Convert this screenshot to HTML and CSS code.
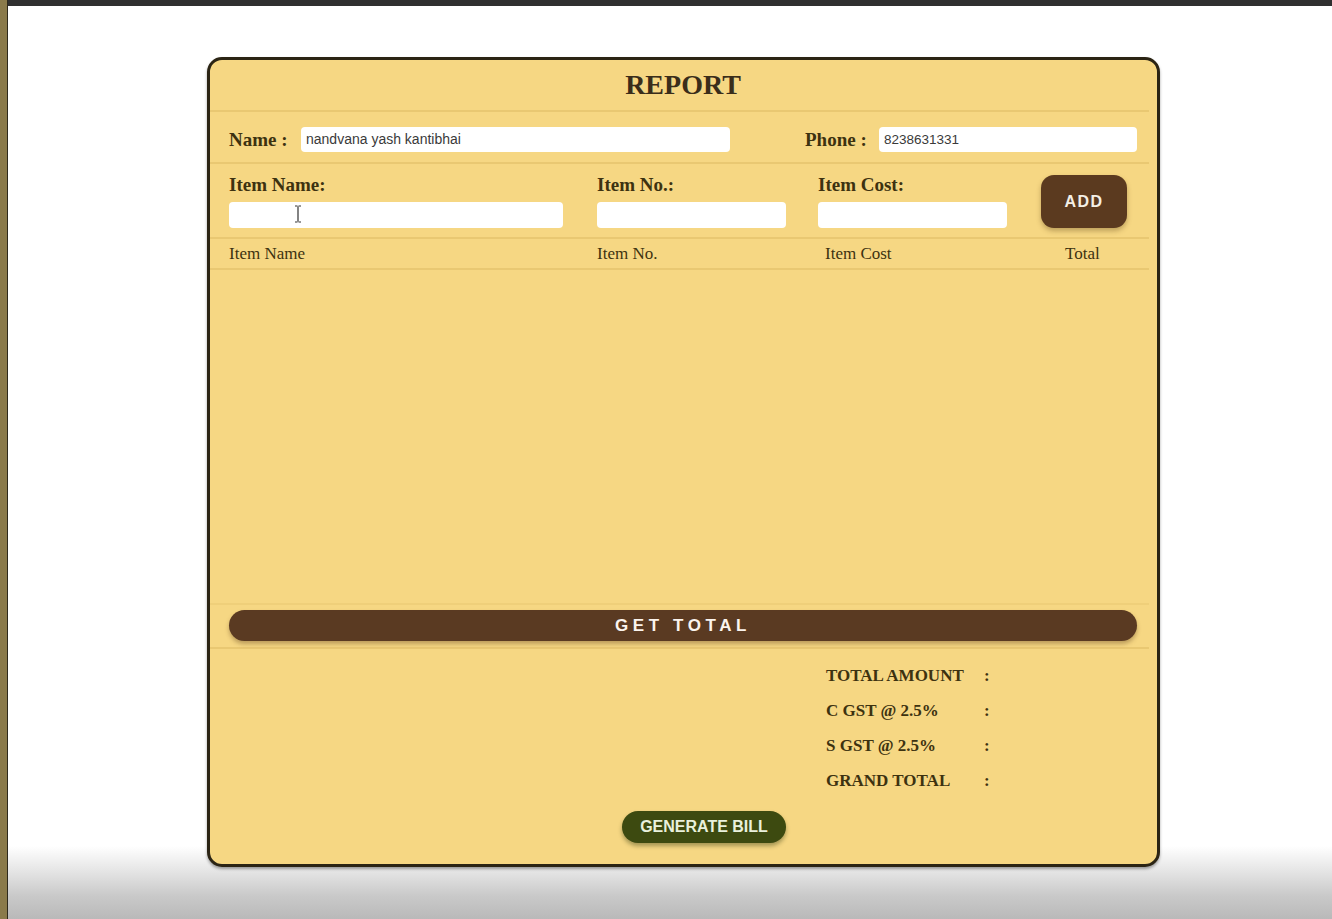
FILE: index.html
```html
<!DOCTYPE html>
<html lang="en">
<head>
<meta charset="utf-8">
<title>Report</title>
<link rel="stylesheet" href="styles.css">
</head>
<body>
<div class="frame">
  <div class="side-strip"></div>
  <div class="viewport">
    <div class="topbar"></div>
    <main class="page">
      <section class="card">
        <h1 class="title">REPORT</h1>

        <div class="row name-row">
          <label class="lbl">Name :</label>
          <div class="input name-input">nandvana yash kantibhai</div>
          <label class="lbl phone-lbl">Phone :</label>
          <div class="input phone-input">8238631331</div>
        </div>

        <div class="row item-row">
          <div class="field">
            <label class="lbl">Item Name:</label>
            <div class="input cursor-host">
              <svg class="ibeam" width="8" height="18" viewBox="0 0 8 18"><path d="M1 1h2.5M4.5 1H7M4 1.5v15M1 17h2.5M4.5 17H7" stroke="#333" stroke-width="1.2" fill="none"/></svg>
            </div>
          </div>
          <div class="field">
            <label class="lbl">Item No.:</label>
            <div class="input"></div>
          </div>
          <div class="field">
            <label class="lbl">Item Cost:</label>
            <div class="input"></div>
          </div>
          <button class="btn add-btn">ADD</button>
        </div>

        <div class="row table-head">
          <span>Item Name</span>
          <span>Item No.</span>
          <span>Item Cost</span>
          <span class="total-col">Total</span>
        </div>

        <div class="row table-body"></div>

        <div class="row total-row">
          <button class="btn get-total">GET TOTAL</button>
        </div>

        <div class="summary">
          <div class="sum-list">
            <div class="sum-line"><span class="sum-lbl">TOTAL AMOUNT</span><span class="colon">:</span></div>
            <div class="sum-line"><span class="sum-lbl">C GST @ 2.5%</span><span class="colon">:</span></div>
            <div class="sum-line"><span class="sum-lbl">S GST @ 2.5%</span><span class="colon">:</span></div>
            <div class="sum-line"><span class="sum-lbl">GRAND TOTAL</span><span class="colon">:</span></div>
          </div>
          <div class="bill-wrap">
            <button class="btn gen-bill">GENERATE BILL</button>
          </div>
        </div>
      </section>
    </main>
  </div>
</div>
</body>
</html>
```

FILE: styles.css
```css
* { box-sizing: border-box; }

html, body {
  margin: 0;
  padding: 0;
  height: 100%;
  overflow: hidden;
}

body {
  font-family: "Liberation Serif", "Times New Roman", serif;
  background: #ffffff;
}

.frame {
  display: flex;
  height: 919px;
}

.side-strip {
  width: 8px;
  flex: 0 0 8px;
  background: #8a7a4a;
  border-right: 1px solid #2e2a1c;
}

.viewport {
  flex: 1;
  display: flex;
  flex-direction: column;
}

.topbar {
  height: 6px;
  background: #303030;
  flex: 0 0 6px;
}

.page {
  flex: 1;
  padding: 51px 0 0 199px;
  background: linear-gradient(to bottom, #ffffff 0, #ffffff 840px, #e4e4e4 866px, #c9c9c9 890px, #b9b9b9 913px);
}

.card {
  width: 953px;
  height: 810px;
  background: #f6d783;
  border: 3px solid #2b2414;
  border-radius: 15px;
  box-shadow: 0 2px 3px rgba(0, 0, 0, 0.35);
  color: #3d3112;
  display: flex;
  flex-direction: column;
}

.title {
  margin: 0 8px 0 0;
  padding-left: 7px;
  height: 52px;
  line-height: 50px;
  text-align: center;
  font-size: 28px;
  font-weight: bold;
  color: #3a2d1a;
  border-bottom: 2px solid #e9c872;
}

.row {
  margin-right: 8px;
  padding-left: 19px;
  border-bottom: 2px solid #e9c872;
}

.lbl {
  font-size: 19px;
  font-weight: bold;
  color: #3d3210;
  line-height: 18px;
}

.input {
  background: #ffffff;
  border-radius: 4px;
  height: 25px;
  font-family: "Liberation Sans", Arial, sans-serif;
  font-size: 14px;
  color: #3a3a3a;
  line-height: 25px;
  padding-left: 5px;
}

.name-row {
  height: 52px;
  display: flex;
  align-items: flex-start;
  padding-top: 15px;
}

.name-row .lbl {
  width: 72px;
  line-height: 25px;
}

.name-input {
  width: 429px;
}

.phone-lbl {
  margin-left: 75px;
  width: 74px !important;
}

.phone-input {
  width: 258px;
  font-size: 13.5px;
}

.item-row {
  height: 75px;
  display: grid;
  grid-template-columns: 368px 221px 223px 86px;
  align-items: end;
  padding-bottom: 9px;
}

.field {
  display: flex;
  flex-direction: column;
  gap: 8px;
}

.field .input {
  height: 26px;
}

.field:nth-child(1) .input { width: 334px; }
.field:nth-child(2) .input,
.field:nth-child(3) .input { width: 189px; }

.cursor-host {
  position: relative;
}

.ibeam {
  position: absolute;
  left: 65px;
  top: 3px;
}

.btn {
  border: none;
  font-family: "Liberation Sans", Arial, sans-serif;
  font-weight: bold;
  color: #ffffff;
  cursor: pointer;
  padding: 0;
}

.add-btn {
  width: 86px;
  height: 53px;
  background: #5b3a1f;
  border-radius: 13px;
  font-size: 16px;
  letter-spacing: 1.5px;
  color: #f4efe6;
  box-shadow: 0 3px 5px rgba(90, 60, 20, 0.35);
}

.table-head {
  height: 31px;
  display: grid;
  grid-template-columns: 368px 228px 240px auto;
  line-height: 29px;
  font-size: 17px;
  color: #3d3210;
}

.table-body {
  height: 335px;
  border-bottom-color: #efcf7a;
}

.total-row {
  height: 44px;
  padding: 5px 13px 0 19px;
}

.get-total {
  width: 908px;
  height: 31px;
  border-radius: 16px;
  background: #5a3a22;
  font-size: 17px;
  letter-spacing: 4.6px;
  color: #fbf4ee;
  box-shadow: 0 3px 4px rgba(80, 50, 20, 0.35);
}

.summary {
  flex: 1;
  padding-top: 9px;
}

.sum-list {
  padding-left: 616px;
}

.sum-line {
  height: 35px;
  line-height: 36px;
  display: flex;
  font-size: 17px;
  font-weight: bold;
  color: #3d3210;
}

.sum-lbl {
  width: 158px;
}

.bill-wrap {
  display: flex;
  justify-content: center;
  padding-left: 41px;
  margin-top: 13px;
}

.gen-bill {
  width: 164px;
  height: 32px;
  border-radius: 16px;
  background: #3d4a10;
  font-size: 16px;
  color: #e9f1dc;
  box-shadow: 0 3px 4px rgba(40, 50, 10, 0.4);
}
```
